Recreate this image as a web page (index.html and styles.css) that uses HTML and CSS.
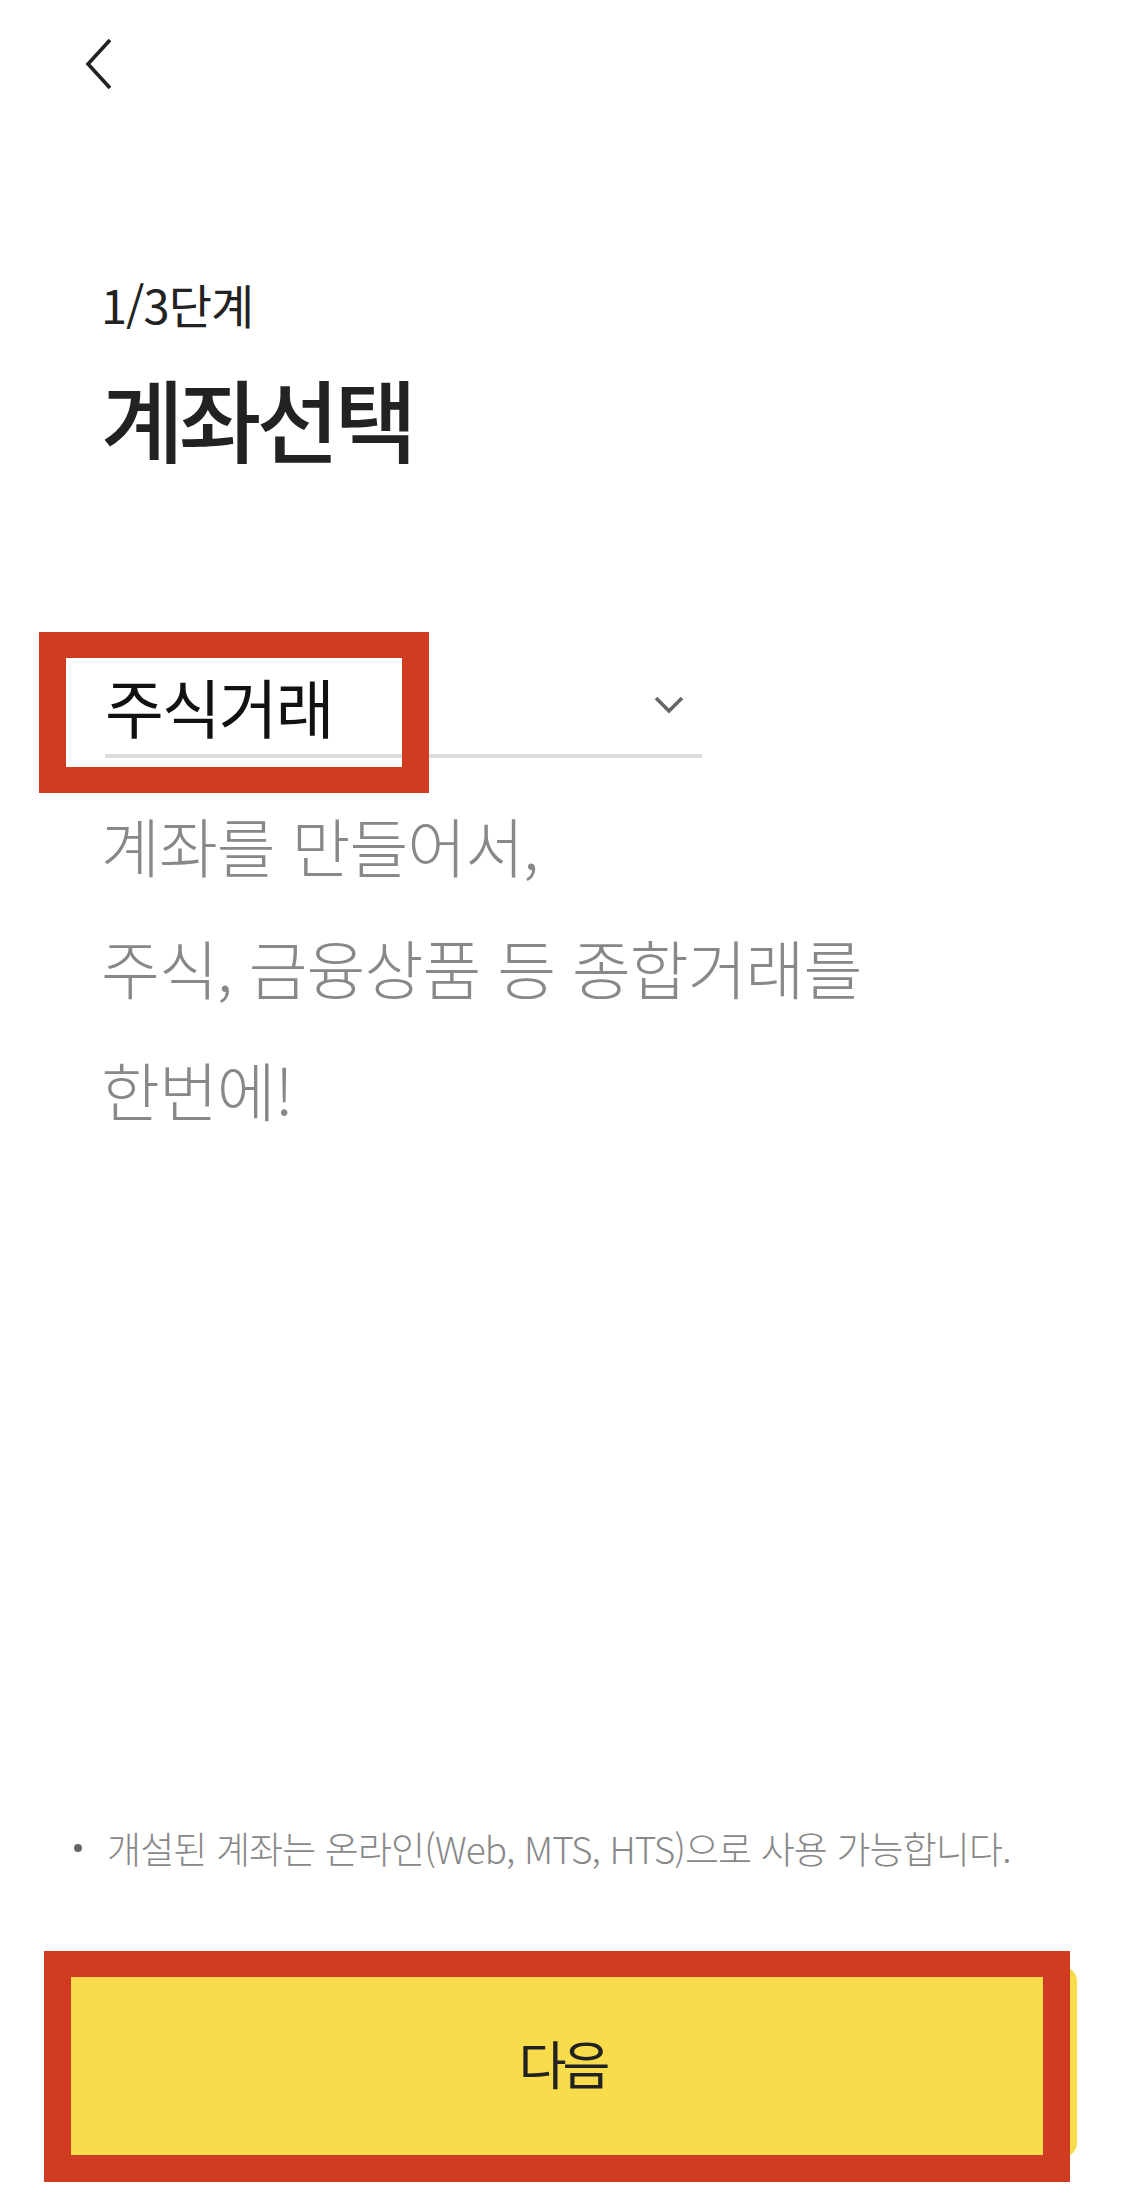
FILE: index.html
```html
<!DOCTYPE html>
<html lang="ko">
<head>
  <meta charset="UTF-8">
  <meta name="viewport" content="width=device-width, initial-scale=1.0">
  <title>계좌선택</title>
  <link rel="stylesheet" href="styles.css">
</head>
<body>
  <div class="screen">
    <header class="topbar">
      <button class="back" aria-label="뒤로">
        <svg width="30" height="54" viewBox="0 0 30 54">
          <polyline points="26,3 4,27 26,51" fill="none" stroke="#222" stroke-width="3.6"/>
        </svg>
      </button>
    </header>

    <main class="content">
      <p class="step">1/3단계</p>
      <h1 class="title">계좌선택</h1>

      <div class="select-wrap">
        <div class="select">
          <span class="select-value">주식거래</span>
          <svg class="select-arrow" width="30" height="18" viewBox="0 0 30 18">
            <polyline points="2,2 15,15 28,2" fill="none" stroke="#666" stroke-width="3.6"/>
          </svg>
        </div>
        <span class="mark mark-select"></span>
      </div>

      <p class="desc">계좌를 만들어서,<br>주식, 금융상품 등 종합거래를<br>한번에!</p>
    </main>

    <footer class="bottom">
      <ul class="notes">
        <li>개설된 계좌는 온라인(Web, MTS, HTS)으로 사용 가능합니다.</li>
      </ul>
      <div class="btn-wrap">
        <button class="btn-next">다음</button>
        <span class="mark mark-btn"></span>
      </div>
    </footer>
  </div>
</body>
</html>
```

FILE: styles.css
```css
:root {
  --text: #222;
  --gray: #888;
  --line: #dcdcdc;
  --yellow: #f8dc4b;
  --mark: #d13b22;
}
* {
  margin: 0;
  padding: 0;
  box-sizing: border-box;
  font-family: 'Noto Sans CJK KR', 'Noto Sans', sans-serif;
}
body {
  background: #fff;
  color: var(--text);
}
.screen {
  min-height: 100vh;
  display: flex;
  flex-direction: column;
}
.topbar {
  height: 126px;
  padding: 37px 0 0 84px;
}
.back {
  background: none;
  border: none;
  display: block;
  width: 30px;
  height: 54px;
}
.back svg {
  display: block;
}
.content {
  padding: 0 0 0 101px;
}
.step {
  margin-top: 148px;
  font-size: 47px;
  line-height: 60px;
  letter-spacing: -1px;
}
.title {
  margin-top: 28px;
  font-size: 90px;
  line-height: 110px;
  font-weight: 500;
  letter-spacing: -5px;
}
.select-wrap {
  position: relative;
  width: 601px;
  margin-top: 188px;
  padding-left: 4px;
}
.select {
  display: flex;
  align-items: center;
  justify-content: space-between;
  height: 98px;
  border-bottom: 4px solid var(--line);
}
.select-value {
  font-size: 64px;
  line-height: 90px;
  color: #111;
  letter-spacing: -2px;
  padding-bottom: 4px;
}
.select-arrow {
  margin-right: 18px;
  margin-bottom: 4px;
}
.desc {
  margin-top: 25px;
  font-size: 64px;
  font-weight: 300;
  line-height: 122px;
  color: var(--gray);
  letter-spacing: -1px;
}
.bottom {
  margin-top: auto;
  padding-bottom: 45px;
}
.notes {
  list-style: none;
  padding: 0 0 0 74px;
  margin-bottom: 96px;
}
.notes li {
  position: relative;
  padding-left: 33px;
  font-size: 37px;
  font-weight: 300;
  line-height: 46px;
  color: var(--gray);
  letter-spacing: -0.9px;
}
.notes li::before {
  content: '';
  position: absolute;
  left: 0;
  top: 19px;
  width: 8px;
  height: 8px;
  border-radius: 50%;
  background: #666;
}
.btn-wrap {
  position: relative;
  margin: 0 48px;
}
.btn-next {
  display: block;
  width: 100%;
  height: 190px;
  border: none;
  border-radius: 14px;
  background: var(--yellow);
  color: var(--text);
  font-size: 52px;
  letter-spacing: -4px;
}
.mark {
  position: absolute;
  border: 26px solid var(--mark);
  pointer-events: none;
}
.mark-select {
  left: -62px;
  top: -28px;
  width: 390px;
  height: 161px;
  border-width: 26px 27px;
}
.mark-btn {
  left: -4px;
  top: -16px;
  width: 1026px;
  height: 231px;
  border-width: 26px 27px 27px 27px;
}
```
